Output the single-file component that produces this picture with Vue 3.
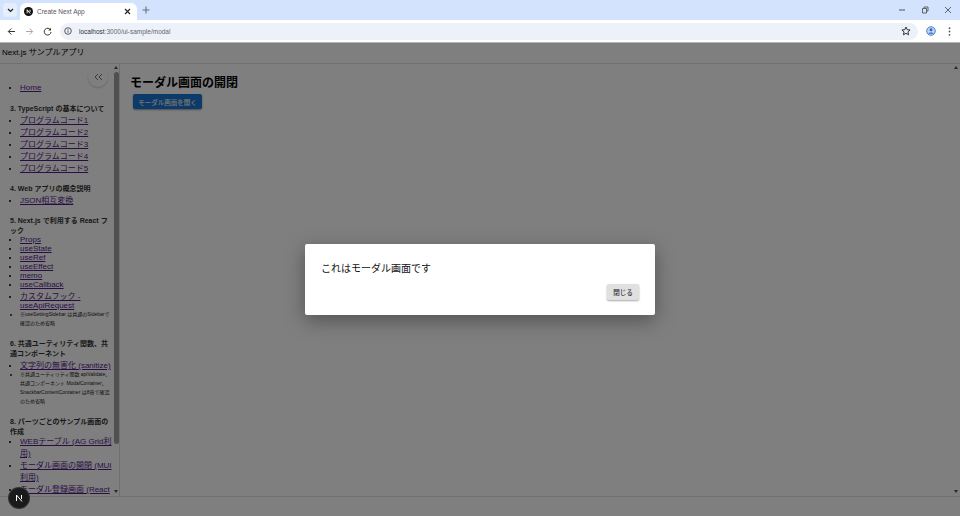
<script setup>
const hasCjk = (t) => /[^\x00-\x7f]/.test(t)
const sections = [
  { items: [{ t: 'Home' }] },
  { head: '3. TypeScript の基本について', items: ['プログラムコード1','プログラムコード2','プログラムコード3','プログラムコード4','プログラムコード5'].map(t => ({ t })) },
  { head: '4. Web アプリの概念説明', items: [{ t: 'JSON相互変換' }] },
  { head: '5. Next.js で利用する React フック', items: [
    { t: 'Props' }, { t: 'useState' }, { t: 'useRef' }, { t: 'useEffect' }, { t: 'memo' }, { t: 'useCallback' },
    { t: 'カスタムフック - useApiRequest' },
    { t: '※useSettingSidebar は共通のSidebarで確認のため省略', note: true }
  ] },
  { head: '6. 共通ユーティリティ関数、共通コンポーネント', items: [
    { t: '文字列の無害化 (sanitize)' },
    { t: '※共通ユーティリティ関数 apiValidate、共通コンポーネント ModalContainer、SnackbarContentContainer は8章で確認のため省略', note: true }
  ] },
  { head: '8. パーツごとのサンプル画面の作成', items: [
    { t: 'WEBテーブル (AG Grid利用)', tall: true }, { t: 'モーダル画面の開閉 (MUI利用)', tall: true }, { t: 'モーダル登録画面 (React Hook Form利用)', tall: true }
  ] }
]
</script>

<template>
  <div class="window">
    <div class="tabstrip">
      <div class="tabsearch">
        <svg width="7" height="5" viewBox="0 0 7 5"><path d="M1 1l2.500 2.500L6 1" fill="none" stroke="#1f1f1f" stroke-width="1.200"/></svg>
      </div>
      <div class="tab">
        <svg width="9" height="9" viewBox="0 0 10 10"><circle cx="5" cy="5" r="5" fill="#111"/><path d="M3.500 7V3l3.400 4.400M6.700 3v2.500" fill="none" stroke="#fff" stroke-width="1"/></svg>
        <span class="tabtitle">Create Next App</span>
        <svg class="tabclose" width="7" height="7" viewBox="0 0 7 7"><path d="M1 1l5 5M6 1l-5 5" stroke="#222" stroke-width="1.100"/></svg>
      </div>
      <svg class="newtab" width="8" height="8" viewBox="0 0 8 8"><path d="M4 .5v7M.5 4h7" stroke="#6a6f78" stroke-width="1.100"/></svg>
      <div class="winctl">
        <svg width="8" height="8" viewBox="0 0 8 8"><path d="M1 4h6" stroke="#555" stroke-width="1"/></svg>
        <svg width="8" height="8" viewBox="0 0 8 8"><path d="M3 2V1h4v4H6M1.500 2.500h4v4.500h-4z" fill="none" stroke="#555" stroke-width=".9"/></svg>
        <svg width="8" height="8" viewBox="0 0 8 8"><path d="M1 1l6 6M7 1L1 7" stroke="#555" stroke-width=".9"/></svg>
      </div>
    </div>

    <div class="toolbar">
      <svg width="9" height="9" viewBox="0 0 9 9"><path d="M8 4.500H1.500M4.300 1.500l-3 3 3 3" fill="none" stroke="#333" stroke-width="1"/></svg>
      <svg width="9" height="9" viewBox="0 0 9 9"><path d="M1 4.500h6.500M4.700 1.500l3 3-3 3" fill="none" stroke="#aaa" stroke-width="1"/></svg>
      <svg width="9" height="9" viewBox="0 0 9 9"><path d="M7.600 3A3.400 3.400 0 1 0 8 5" fill="none" stroke="#333" stroke-width="1"/><path d="M8 .8v2.700H5.300z" fill="#333"/></svg>
      <div class="omnibox">
        <svg width="8" height="8" viewBox="0 0 8 8"><circle cx="4" cy="4" r="3.300" fill="none" stroke="#333" stroke-width=".8"/><path d="M4 3.400v2.400M4 2v.8" stroke="#333" stroke-width=".8"/></svg>
        <span class="url"><b>localhost</b>:3000/ui-sample/modal</span>
        <svg class="star" width="10" height="10" viewBox="0 0 10 10"><path d="M5 1l1.200 2.700 2.900.3-2.200 1.900.7 2.900L5 7.300 2.400 8.800l.7-2.900L.9 4l2.900-.3z" fill="none" stroke="#333" stroke-width="1"/></svg>
      </div>
      <svg class="profile" width="10" height="10" viewBox="0 0 10 10"><circle cx="5" cy="5" r="4.300" fill="#c2d7f5" stroke="#3b73d1" stroke-width=".9"/><circle cx="5" cy="3.800" r="1.500" fill="#2f65c0"/><path d="M2.300 7.800C3 6 7 6 7.700 7.800" fill="#2f65c0"/></svg>
      <svg class="menu" width="3" height="9" viewBox="0 0 3 9"><circle cx="1.500" cy="1.200" r=".9" fill="#555"/><circle cx="1.500" cy="4.500" r=".9" fill="#555"/><circle cx="1.500" cy="7.800" r=".9" fill="#555"/></svg>
    </div>

    <div class="page">
      <header class="apphead">Next.js サンプルアプリ</header>
      <div class="body">
        <aside class="sidebar">
          <div class="sidescroll">
            <template v-for="(s, i) in sections" :key="i">
              <h3 v-if="s.head">{{ s.head }}</h3>
              <ul>
                <li v-for="it in s.items" :key="it.t" :class="{ note: it.note, cjk: hasCjk(it.t), tall: it.tall }">
                  <span v-if="it.note">{{ it.t }}</span>
                  <a v-else href="#">{{ it.t }}</a>
                </li>
              </ul>
            </template>
          </div>
          <button class="collapse">
            <svg width="9" height="8" viewBox="0 0 9 8"><path d="M4 1L1 4l3 3M8 1L5 4l3 3" fill="none" stroke="#666" stroke-width=".9"/></svg>
          </button>
          <div class="vbar side">
            <i class="up"></i><i class="thumb"></i><i class="down"></i>
          </div>
        </aside>
        <main class="main">
          <h1>モーダル画面の開閉</h1>
          <button class="primary">モーダル画面を開く</button>
        </main>
        <div class="vbar page-bar"><i class="up"></i><i class="down"></i></div>
      </div>
      <footer class="appfoot"></footer>

      <div class="overlay">
        <div class="modal">
          <p>これはモーダル画面です</p>
          <div class="actions"><button class="close">閉じる</button></div>
        </div>
      </div>
      <div class="devbadge">
        <svg width="10" height="10" viewBox="0 0 10 10"><path d="M2.500 8V2L8 8.500M7.500 2v4" fill="none" stroke="#fff" stroke-width="1"/></svg>
      </div>
    </div>
  </div>
</template>

<style>
html, body { margin: 0; padding: 0; overflow: hidden; }
</style>

<style scoped>
.window {
  width: 960px; height: 516px; display: flex; flex-direction: column; overflow: hidden;
  font-family: "Liberation Sans", "Noto Sans CJK JP", sans-serif; color: #000;
}
.tabstrip { height: 20px; background: #d3e3fd; display: flex; align-items: flex-end; flex: none; }
.tabsearch { width: 14px; height: 14px; margin: 0 0 3px 3px; background: #e6eefb; border-radius: 4px; display: flex; align-items: center; justify-content: center; }
.tab { width: 117px; height: 17px; margin-left: 3px; background: #fff; border-radius: 6px 6px 0 0; display: flex; align-items: center; padding: 0 6px 0 4px; box-sizing: border-box; gap: 4px; }
.tabtitle { font-size: 6.5px; color: #555; flex: 1; }
.newtab { margin: 0 0 6px 5px; }
.winctl { margin-left: auto; display: flex; gap: 15px; margin-right: 8px; align-self: center; }
.toolbar { height: 23px; background: #fff; border-bottom: 1px solid #b4b4b4; box-sizing: border-box; display: flex; align-items: center; padding: 0 0 0 7px; gap: 9px; flex: none; }
.omnibox { margin-left: -1px; flex: 1; height: 17px; background: #edf2fa; border-radius: 9px; display: flex; align-items: center; padding: 0 7px 0 4px; gap: 7px; }
.url { font-size: 6.5px; color: #666; flex: 1; }
.url b { font-weight: normal; color: #333; }
.profile { margin-left: -1px; }
.menu { margin: 0 9px 0 3.500px; }
.page { flex: 1; position: relative; display: flex; flex-direction: column; background: #fff; min-height: 0; }
.apphead { height: 21px; box-sizing: border-box; border-bottom: 1px solid #e0e0e0; font-size: 8px; padding: 3px 0 0 2px; flex: none; }
.body { flex: 1; display: flex; min-height: 0; }
.sidebar { width: 120px; box-sizing: border-box; border-right: 1px solid #e0e0e0; position: relative; display: flex; flex: none; }
.sidescroll { flex: 1; overflow: hidden; padding: 19px 0 0 10px; min-width: 0; font-size: 8px; }
h3 { font-size: 7px; font-weight: bold; margin: 10px 0 0; color: #333; }
ul { margin: 0; padding: 0 0 0 10px; }
.sidescroll > ul:first-child { margin-bottom: 11px; }
.sidescroll > ul:first-child + h3 { margin-top: 0; }
.sidescroll li { margin: 0; }
.sidescroll li.cjk { padding-top: 1px; }
.sidescroll li.tall { padding-top: 0; line-height: 12px; }
a { color: #551a8b; text-decoration: underline; }
.note { font-size: 5px; line-height: 9px; color: #222; }
.sidescroll li.note { padding-top: 0; }
.collapse { position: absolute; left: 88px; top: 3px; width: 20px; height: 20px; border-radius: 50%; border: 0; padding: 0; background: #fff; box-shadow: 0 1px 2px rgba(0,0,0,.2); display: flex; align-items: center; justify-content: center; }
.vbar { width: 6px; flex: none; position: relative; display: flex; flex-direction: column; align-items: center; }
.vbar .up { width: 0; height: 0; border: 2.500px solid transparent; border-top: 0; border-bottom: 3px solid #505050; margin-top: 2px; flex: none; }
.vbar .down { width: 0; height: 0; border: 2.500px solid transparent; border-bottom: 0; border-top: 3px solid #505050; margin-top: auto; margin-bottom: 3px; flex: none; }
.thumb { width: 5px; height: 372px; margin-top: 3px; background: #a0a0a0; border-radius: 3px; flex: none; }
.main { flex: 1; padding: 12px 10px 0; min-width: 0; }
h1 { font-size: 12px; font-weight: bold; margin: 0; line-height: 14px; }
.primary { display: block; margin: 4px 0 0 3px; width: 69px; height: 15px; background: #1976d2; color: #eee; border: 0; border-radius: 2px; padding: 0; font: 500 6.5px "Liberation Sans", "Noto Sans CJK JP", sans-serif; box-shadow: 0 1px 2px rgba(0,0,0,.4); }
.page-bar { width: 8px; }
.appfoot { height: 20px; border-top: 1px solid #e0e0e0; box-sizing: border-box; flex: none; }
.overlay { position: absolute; inset: 0; background: rgba(0,0,0,.5); display: flex; align-items: center; justify-content: center; }
.modal { width: 350px; height: 71px; box-sizing: border-box; background: #fff; border-radius: 2px; padding: 17px 16px 0; box-shadow: 0 6px 20px rgba(0,0,0,.35); display: flex; flex-direction: column; }
.modal p { margin: 0; font-size: 10px; line-height: 15px; color: #111; }
.actions { display: flex; justify-content: flex-end; margin-top: 8px; }
.close { width: 32px; height: 16px; border: 0; padding: 0; border-radius: 2px; background: #e0e0e0; color: #333; font: 500 6.5px "Liberation Sans", "Noto Sans CJK JP", sans-serif; box-shadow: 0 1px 2px rgba(0,0,0,.35); }
.devbadge { position: absolute; left: 9px; top: 445px; width: 20px; height: 20px; border-radius: 50%; background: #1a1a1a; display: flex; align-items: center; justify-content: center; box-shadow: 0 0 0 1px #333; }
</style>
